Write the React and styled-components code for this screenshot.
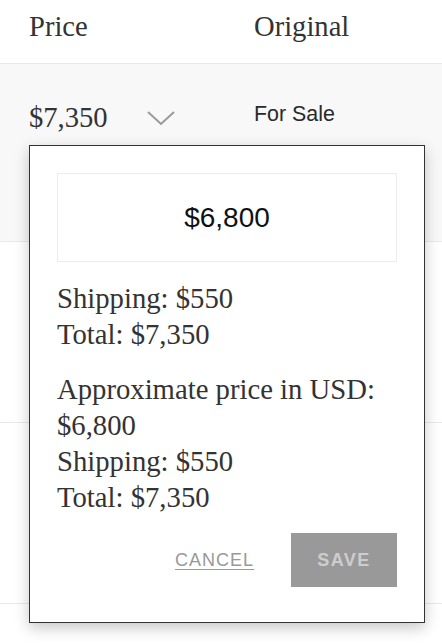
import React from 'react';
import styled, { createGlobalStyle } from 'styled-components';

const GlobalStyle = createGlobalStyle`
  html, body {
    margin: 0;
    padding: 0;
    background: #fff;
  }
  body {
    font-family: 'Liberation Serif', 'Times New Roman', serif;
    color: #333;
  }
`;

const Table = styled.div`
  width: 442px;
  height: 644px;
  overflow: hidden;
`;

const Row = styled.div`
  position: relative;
  display: flex;
  align-items: flex-start;
  box-sizing: border-box;
  height: ${(p) => p.h}px;
  padding: ${(p) => p.pt}px 0 0 29px;
  background: ${(p) => (p.shaded ? '#f8f8f8' : '#fff')};
  border-bottom: 1px solid #e9e9e9;
`;

const PriceCell = styled.div`
  display: flex;
  align-items: center;
  width: 225px;
  font-size: 28.6px;
  line-height: 32px;
  color: #333;
`;

const Chevron = styled.svg`
  margin-left: 39px;
  width: 28px;
  height: 16px;
`;

const SansCell = styled.div`
  font-family: 'Liberation Sans', Arial, sans-serif;
  font-size: 21.4px;
  line-height: 24px;
  color: #2a2a2a;
`;

const HeadCell = styled.div`
  width: ${(p) => p.w || 'auto'};
  font-size: 28.6px;
  line-height: 32px;
  color: #333;
`;

const Popup = styled.div`
  position: absolute;
  left: 29px;
  top: 81px;
  z-index: 2;
  box-sizing: border-box;
  width: 396px;
  padding: 27px 27px 35px;
  background: #fff;
  border: 1px solid #333;
  box-shadow: 0 5px 14px rgba(0, 0, 0, 0.22);
`;

const AmountBox = styled.div`
  display: flex;
  align-items: center;
  justify-content: center;
  box-sizing: border-box;
  height: 89px;
  border: 1px solid #ececec;
  font-family: 'Liberation Sans', Arial, sans-serif;
  font-size: 28px;
  color: #111;
`;

const Info = styled.p`
  margin: ${(p) => p.mt}px 0 0;
  font-size: 28.7px;
  line-height: 36px;
  color: #333;
`;

const Actions = styled.div`
  display: flex;
  justify-content: flex-end;
  align-items: center;
  gap: 37px;
  margin-top: 18px;
`;

const TextButton = styled.button`
  padding: 0;
  border: none;
  background: none;
  font-family: 'Liberation Sans', Arial, sans-serif;
  font-size: 18px;
  letter-spacing: 1px;
  color: #999;
  text-decoration: underline;
  text-underline-offset: 3px;
`;

const SaveButton = styled.button`
  width: 106px;
  height: 54px;
  border: none;
  background: #999;
  font-family: 'Liberation Sans', Arial, sans-serif;
  font-weight: bold;
  font-size: 18px;
  letter-spacing: 1.5px;
  color: #cdcdcd;
`;

export default function App() {
  return (
    <Table>
      <GlobalStyle />
      <Row h={64} pt={11}>
        <HeadCell w="225px">Price</HeadCell>
        <HeadCell>Original</HeadCell>
      </Row>
      <Row h={178} pt={38} shaded>
        <PriceCell>
          $7,350
          <Chevron viewBox="0 0 28 16">
            <polyline points="1,2 14,14 27,2" fill="none" stroke="#999" strokeWidth="2" />
          </Chevron>
        </PriceCell>
        <SansCell>For Sale</SansCell>
        <Popup>
          <AmountBox>$6,800</AmountBox>
          <Info mt={18}>
            Shipping: $550
            <br />
            Total: $7,350
          </Info>
          <Info mt={19}>
            Approximate price in USD:
            <br />
            $6,800
            <br />
            Shipping: $550
            <br />
            Total: $7,350
          </Info>
          <Actions>
            <TextButton>CANCEL</TextButton>
            <SaveButton>SAVE</SaveButton>
          </Actions>
        </Popup>
      </Row>
      <Row h={181} pt={38} />
      <Row h={181} pt={38} />
      <Row h={181} pt={38} />
    </Table>
  );
}
